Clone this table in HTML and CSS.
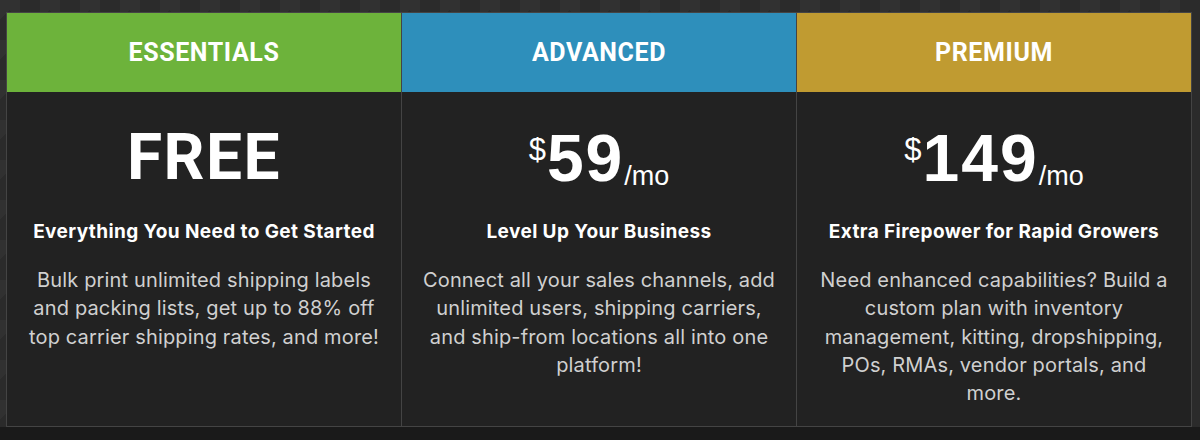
FILE: index.html
```html
<!DOCTYPE html>
<html lang="en">
<head>
<meta charset="utf-8">
<title>Plans</title>
<link rel="stylesheet" href="styles.css">
</head>
<body>
<div class="page">
  <section class="plans">
    <article class="plan">
      <header class="plan-head green">ESSENTIALS</header>
      <div class="plan-body">
        <div class="price"><span class="amount free">FREE</span></div>
        <h3 class="tagline">Everything You Need to Get Started</h3>
        <p class="desc">Bulk print unlimited shipping labels and packing lists, get up to 88% off top carrier shipping rates, and more!</p>
      </div>
    </article>
    <article class="plan">
      <header class="plan-head blue">ADVANCED</header>
      <div class="plan-body">
        <div class="price"><span class="cur">$</span><span class="amount">59</span><span class="per">/mo</span></div>
        <h3 class="tagline">Level Up Your Business</h3>
        <p class="desc">Connect all your sales channels, add unlimited users, shipping carriers, and ship-from locations all into one platform!</p>
      </div>
    </article>
    <article class="plan">
      <header class="plan-head gold">PREMIUM</header>
      <div class="plan-body">
        <div class="price"><span class="cur">$</span><span class="amount">149</span><span class="per">/mo</span></div>
        <h3 class="tagline">Extra Firepower for Rapid Growers</h3>
        <p class="desc">Need enhanced capabilities? Build a custom plan with inventory management, kitting, dropshipping, POs, RMAs, vendor portals, and more.</p>
      </div>
    </article>
  </section>
</div>
<div class="footer-strip"></div>
</body>
</html>
```

FILE: styles.css
```css
html, body {
  margin: 0;
  padding: 0;
}
body {
  background: #1a1a1a;
  font-family: "Inter", "Liberation Sans", sans-serif;
  height: 440px;
  overflow: hidden;
}
.page {
  padding: 12px 8px 0 6px;
  background-color: #2b2b2b;
  background-image:
    linear-gradient(135deg, #313131 25%, transparent 25%),
    linear-gradient(225deg, #313131 25%, transparent 25%);
  background-size: 40px 40px;
  background-position: 0 0, 20px 0;
}
.plans {
  display: grid;
  grid-template-columns: 394px 394px 394px;
  column-gap: 1px;
  background: #444;
  border: 1px solid #444;
  height: 413px;
}
.plan {
  display: flex;
  flex-direction: column;
  background: #222;
}
.plan-head {
  height: 79px;
  display: flex;
  align-items: center;
  justify-content: center;
  color: #fff;
  font-family: "Roboto", "Liberation Sans", sans-serif;
  font-weight: 700;
  font-size: 25px;
  letter-spacing: 0.6px;
}
.green { background: #6db33b; }
.blue { background: #2e8fbb; }
.gold { background: #c09b31; }
.plan-body {
  display: flex;
  flex-direction: column;
  align-items: center;
  text-align: center;
  padding: 34px 19px 0;
}
.price {
  display: flex;
  align-items: flex-start;
  color: #fff;
  font-family: "Liberation Sans", Arial, sans-serif;
  font-weight: 700;
  height: 64px;
}
.amount {
  font-size: 66px;
  line-height: 64px;
  letter-spacing: 2px;
}
.free {
  font-family: "Roboto", "Liberation Sans", sans-serif;
  font-size: 64px;
  letter-spacing: 1.5px;
}
.cur {
  font-weight: 400;
  font-size: 31px;
  line-height: 30px;
  margin-top: 9px;
  margin-right: 1px;
}
.per {
  font-weight: 400;
  font-size: 27px;
  line-height: 27px;
  align-self: flex-end;
  margin-bottom: 0;
}
.tagline {
  margin: 30px 0 0;
  color: #fff;
  font-size: 19px;
  font-weight: 700;
  line-height: 24px;
  letter-spacing: 0.4px;
}
.desc {
  margin: 22px 0 0;
  color: #d0d0d0;
  font-size: 20px;
  line-height: 28.3px;
  letter-spacing: 0.15px;
}
.footer-strip {
  height: 13px;
  background: #1a1a1a;
}
```
